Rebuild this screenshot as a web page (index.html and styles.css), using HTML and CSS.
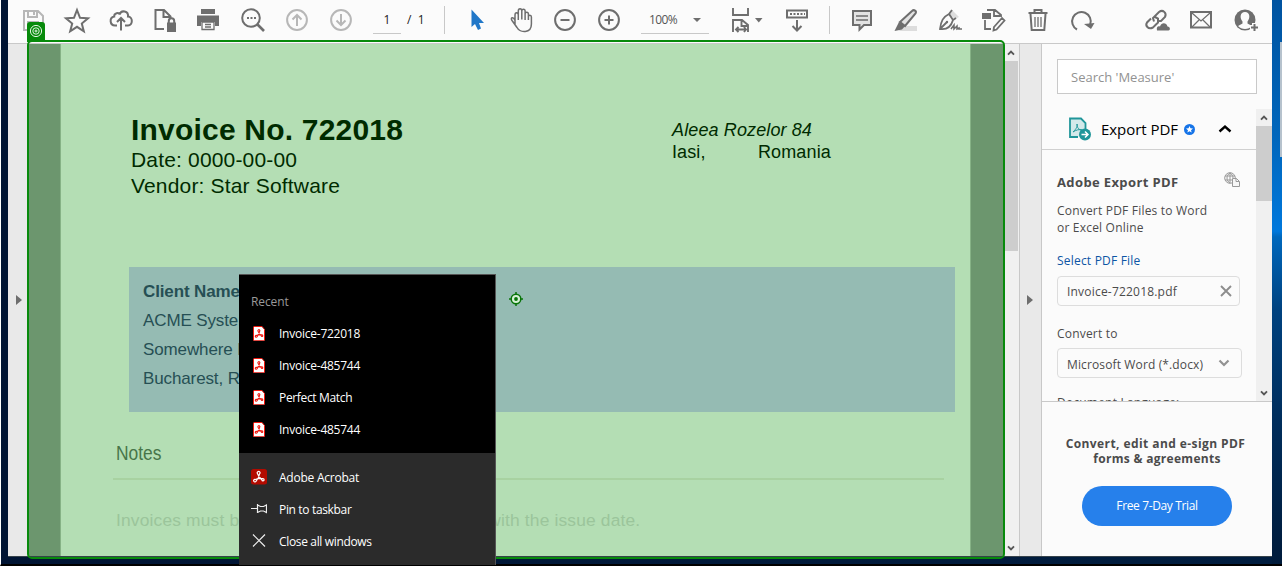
FILE: index.html
```html
<!DOCTYPE html>
<html lang="en">
<head>
<meta charset="utf-8">
<title>Invoice-722018.pdf</title>
<link rel="stylesheet" href="styles.css">
</head>
<body>
<svg class="defs" width="0" height="0">
  <symbol id="pdf" viewBox="0 0 12 15"><path d="M1 .5h8l2.500 3V14a.8.8 0 0 1-.8.8H1.300A.8.8 0 0 1 .5 14V1z" fill="#fff" stroke="#f0180f"/><path d="M5 5.200a1 1 0 1 1 1.600.2C6.300 7 5.300 9.200 4 10.800a.9.9 0 1 1-.5-1.300C5.300 8.700 7.500 8.500 9 8.900a.8.8 0 1 1-.8.9C7 8.500 5.600 7 5 5.200z" fill="none" stroke="#f0180f" stroke-width="1.100"/></symbol>
  <symbol id="up" viewBox="0 0 8 6"><path d="M1 4.700 4 1.700l3 3" fill="none" stroke="#555" stroke-width="1.900"/></symbol>
  <symbol id="down" viewBox="0 0 8 6"><path d="M1 1.300l3 3 3-3" fill="none" stroke="#555" stroke-width="1.900"/></symbol>
</svg>
<div class="desktop">
  <div class="window">
    <header class="toolbar">
      <svg class="tool faint" viewBox="0 0 44 43"><path d="M13 11h14l5 5v14H13zM17 11v6h9v-6M23 12v3M17 30v-8h10v8"/></svg>
      <svg class="tool" viewBox="0 0 44 43"><path d="M22 10l3 7.800 8 .5-6.200 5.200 2 7.800L22 26.800l-6.800 4.500 2-7.800L11 18.300l8-.5z"/></svg>
      <svg class="tool" viewBox="0 0 44 43"><path d="M18 25.500h-2a4.500 4.500 0 0 1-.8-8.900c-.3-3.500 5-4.700 5.500-2 1.500-5.300 9-3.500 8.300 2 5.200 0 5 8.900 0 8.900h-3M22 30.500V18M18 22l4-4 4 4"/></svg>
      <svg class="tool" viewBox="0 0 44 43"><path d="M21 29h-8.500V10H21l6.500 6.500V19M20.500 10v7H27"/><path class="fill" d="M24 22.500h9V32h-9z"/><path d="M25.800 23v-2a2.700 2.700 0 0 1 5.400 0v2"/></svg>
      <svg class="tool" viewBox="0 0 44 43"><path class="fill" d="M14 9h14v5H14zM10 15.500h22V26h-4v-4H14v4h-4z"/><path d="M15 22h12v7.500H15zM18 24.500h6M18 27h6" stroke-width="1.300"/></svg>
      <svg class="tool" viewBox="0 0 44 43"><circle cx="20" cy="18" r="8.800"/><path d="M26 24l7 7" stroke-width="2.600"/><path d="M16 18h2m1.500 0h2m1.500 0h2"/></svg>
      <svg class="tool faint" viewBox="0 0 44 43"><circle cx="22" cy="20" r="9.900"/><path d="M22 26V15M17.500 19.500 22 15l4.500 4.500"/></svg>
      <svg class="tool faint" viewBox="0 0 44 43"><circle cx="22" cy="20" r="9.900"/><path d="M22 14v11M17.500 20.500 22 25l4.500-4.500"/></svg>
      <div class="pages"><span class="page-field">1</span><span class="page-total">/&nbsp; 1</span></div>
      <i class="divider"></i>
      <div class="group view">
        <svg class="tool" viewBox="0 0 44 43"><path d="M16.500 9.500V27l3.500-3 3 6 3-1.500-2-5.500h5z" fill="#2077c8" stroke="none"/></svg>
        <svg class="tool" viewBox="0 0 44 43"><path d="M16 24v-9c0-3 3.300-3 3.300 0v5-9c0-3 3.500-3 3.500 0v8.500V11c0-2.500 3.300-2.500 3.300 0v9-6c0-2.500 3.300-2.500 3.300 0v6-3c0-2.500 3-2.200 3 0v7c0 10-11.500 8.700-14.400 3.500l-5-7c-2-3 1.300-4.200 3 0z" stroke-width="1.500"/></svg>
        <svg class="tool" viewBox="0 0 44 43"><circle cx="22" cy="20" r="9.900"/><path d="M17.500 20h9"/></svg>
        <svg class="tool" viewBox="0 0 44 43"><circle cx="22" cy="20" r="9.900"/><path d="M17.500 20h9M22 15.500v9"/></svg>
      </div>
      <div class="zoom"><span>100%</span><i class="caret"></i></div>
      <svg class="tool fit" viewBox="0 0 50 43"><path d="M9 8v7h15V8M9 32V20h9l6 5v7M17.500 20v6H24M12 29.500h10M14.500 27 12 29.500l2.500 2.500M20 27l2 2.500-2 2.500" stroke-width="1.900"/><path class="fill" d="M31 18h7.500l-3.700 4.400z"/></svg>
      <svg class="tool" viewBox="0 0 44 43"><path d="M12 10.500h20v7H12zM22 20v10M17.500 26l4.500 4.500 4.500-4.500"/><path d="M15 14h15" stroke-dasharray="2 1.500"/></svg>
      <i class="divider second"></i>
      <div class="group edit">
        <svg class="tool" viewBox="0 0 44 43"><path class="tint" d="M13 11h18v14h-7l-4.500 4.500V25H13z"/><path d="M16 16h12M16 20h12" stroke-width="1.300"/></svg>
        <svg class="tool" viewBox="0 0 44 43"><path fill="#ddd" stroke="none" d="M18 26h15v5H15z"/><path class="tint" d="M16 22 28 11c2-2 5 0 3.500 2.500L21 26z"/><path class="fill" d="m15 22 6 4-3 3.500-7.500 1.500z"/></svg>
        <svg class="tool" viewBox="0 0 44 43"><path fill="#ddd" stroke="none" d="m24 10 7 7-4 2-6-5z"/><path d="M21 14c-6 3-8 7-9 15 7 1 11-2 13-9zM21 14l3-4M25 20l3-2M12 29l7-7" stroke-width="1.800"/><circle class="fill" cx="19" cy="22" r="1.200"/><path d="m23 29 3-4 0 4 3-3v3l2-1 0 1h3" stroke-width="1.500"/></svg>
        <svg class="tool" viewBox="0 0 44 43"><path class="fill" d="M10 13h9v6h-9z"/><path d="M15 10h8l6 5v2M22 10v6h6M13 20v9h6M22 27l8-9 2.500 2.500-8 9-3 1z" stroke-width="1.800"/></svg>
        <svg class="tool" viewBox="0 0 44 43"><path d="M12.500 13h19M18.500 12v-2h7v2M14.500 14l1.200 16h12.600l1.200-16"/><path d="M19 17v10M22 17v10M25 17v10" stroke-width="1.300"/></svg>
        <svg class="tool" viewBox="0 0 44 43"><path d="M17 29.500a9.300 9.300 0 1 1 13.200-5"/><path class="fill" d="m24 24 10.500-1-3.500 6z"/></svg>
      </div>
      <div class="group share">
        <svg class="tool" viewBox="0 0 44 43"><path d="m19 21.500-1-3.500 6-6c4-3 8 1 6 5l-4 4h-4M20 17l3 1.500 0 4-5 5c-5 2.500-8-2-6-5l4-4"/><path class="fill" d="M22 30.500c-1-4 1.500-5 3-4 1.500-4.500 6.500-4 7.500 0 3 0 3 4 1 4z"/></svg>
        <svg class="tool" viewBox="0 0 44 43"><path d="M12 12h20v15.500H12z"/><path d="m13 13 9 8 9-8M13 27l7-7m11 7-7-7" stroke-width="1.200"/></svg>
        <svg class="tool" viewBox="0 0 44 43"><circle class="fill" cx="22" cy="20" r="10.500"/><path d="M22 12c-5 0-5.500 6-2.500 9.500v2L15 26c3.500 4 10.500 4 14 0l-4.500-2.500v-2C27.500 18 27 12 22 12z" fill="#fbfbfb" stroke="none"/><path d="M27 27.500h9M31.500 23v9" stroke="#fbfbfb" stroke-width="5"/><path d="M28 27.500h7M31.500 24v7"/></svg>
      </div>
    </header>
    <main class="body">
      <div class="gutter left"><i class="tri"></i></div>
      <section class="viewer">
        <article class="page">
          <div class="heading">
            <div class="issuer"><h1>Invoice No. 722018</h1><p>Date: 0000-00-00</p><p>Vendor: Star Software</p></div>
            <address><em>Aleea Rozelor 84</em><div class="city"><span>Iasi,</span><span>Romania</span></div></address>
          </div>
          <div class="client"><strong>Client Name</strong><span>ACME Systems</span><span>Somewhere Else</span><span>Bucharest, Romania</span></div>
          <h2><span>Notes</span></h2>
          <p class="note">Invoices must be paid within forty days starting with the issue date.</p>
        </article>
      </section>
      <div class="scroll main-scroll"><svg><use href="#up"/></svg><i></i><svg class="end"><use href="#down"/></svg></div>
      <div class="gutter right"><i class="tri"></i></div>
      <aside class="side">
        <div class="search"><span>Search 'Measure'</span></div>
        <div class="panel">
          <div class="tools">
            <div class="export">
              <svg class="export-icon" viewBox="0 0 24 24"><path d="M10 20H2V1.500h11L17.500 6v7" fill="#d3e9ea" stroke="#20969a" stroke-width="1.800"/><path d="M5 15c2-2 5-5 4-8 0 4 2 6 5 6-3-1-6 0-9 2z" fill="none" stroke="#20969a"/><circle cx="17" cy="17.500" r="6" fill="#20969a"/><path d="M13.500 17.500h6m-2.500-3 3 3-3 3" fill="none" stroke="#fff" stroke-width="1.500"/></svg>
              <span>Export PDF</span>
              <svg class="star" viewBox="0 0 11 11"><circle cx="5.500" cy="5.500" r="5.500" fill="#1674e8"/><path d="m5.500 2 1 2.300 2.500.2-2 1.700.7 2.400-2.200-1.300-2.200 1.300L4 6.200 2 4.500l2.500-.2z" fill="#fff"/></svg>
              <svg class="collapse" viewBox="0 0 14 10"><path d="m1.500 7.500 5.500-5 5.500 5" fill="none" stroke="#000" stroke-width="2.400"/></svg>
            </div>
            <div class="form">
              <div class="form-title"><b>Adobe Export PDF</b><svg viewBox="0 0 17 16" fill="none" stroke="#999"><circle cx="6" cy="6" r="5.300"/><path d="M1 4h10M1 8h9M6 1v10M6 1C2 3 2 9 6 11M6 1c2 1 3 3 3 5"/><path d="M8.500 6.500h4l3 3v5h-7zM12 6.500v3h3" fill="#f7f7f7"/></svg></div>
              <p class="lead">Convert PDF Files to Word<br>or Excel Online</p>
              <p class="link">Select PDF File</p>
              <div class="field file"><span>Invoice-722018.pdf</span><svg viewBox="0 0 12 12"><path d="m1 1 10 10M11 1 1 11" stroke="#8d8d8d" stroke-width="1.900"/></svg></div>
              <p class="label">Convert to</p>
              <div class="field format"><span>Microsoft Word (*.docx)</span><svg viewBox="0 0 12 8"><path d="m1.500 1.500 4.500 4.500 4.500-4.500" fill="none" stroke="#929292" stroke-width="2.200"/></svg></div>
              <p class="label language">Document Language:</p>
            </div>
          </div>
          <div class="scroll side-scroll"><svg><use href="#up"/></svg><i></i><svg class="end"><use href="#down"/></svg></div>
        </div>
        <div class="promo"><b class="p1">Convert, edit and e-sign PDF</b><b class="p2">forms &amp; agreements</b><div class="trial">Free 7-Day Trial</div></div>
      </aside>
    </main>
  </div>
  <div class="other-window"></div>
  <div class="highlight"></div>
  <div class="highlight-tag"><svg viewBox="0 0 14 14" fill="none" stroke="#e4f5e4"><circle cx="7" cy="7" r="5.600"/><circle cx="7" cy="7" r="3.200"/><circle cx="7" cy="7" r="1"/></svg></div>
  <svg class="target" viewBox="0 0 14 14"><circle cx="7" cy="7" r="4.800" fill="#d6f1d6" stroke="#087408" stroke-width="1.500"/><circle cx="7" cy="7" r="1.900" fill="#087408"/><path d="M7 0v3M7 11v3M0 7h3M11 7h3" stroke="#087408" stroke-width="1.500"/></svg>
  <nav class="menu">
    <div class="recent">
      <div class="caption">Recent</div>
      <div class="item"><svg class="doc"><use href="#pdf"/></svg><span>Invoice-722018</span></div>
      <div class="item"><svg class="doc"><use href="#pdf"/></svg><span>Invoice-485744</span></div>
      <div class="item"><svg class="doc"><use href="#pdf"/></svg><span class="match">Perfect Match</span></div>
      <div class="item"><svg class="doc"><use href="#pdf"/></svg><span>Invoice-485744</span></div>
    </div>
    <div class="actions">
      <div class="item"><svg viewBox="0 0 16 16"><rect width="16" height="15.500" rx="2.500" fill="#b30b00"/><path transform="translate(-.6 -2.800) scale(1.400)" d="M5 5.200a1 1 0 1 1 1.600.2C6.300 7 5.300 9.200 4 10.800a.9.9 0 1 1-.5-1.300C5.300 8.700 7.500 8.500 9 8.900a.8.8 0 1 1-.8.9C7 8.500 5.600 7 5 5.200z" fill="none" stroke="#fff" stroke-width=".85"/></svg><span class="acrobat">Adobe Acrobat</span></div>
      <div class="item"><svg viewBox="0 0 16 16" fill="none" stroke="#eee" stroke-width="1.200"><path d="M0 7.500h6M6.500 3v9M6.500 4l3 1.500h3L15.500 4v7.500l-3-1.500h-3l-3 1.500"/></svg><span class="pin">Pin to taskbar</span></div>
      <div class="item"><svg viewBox="0 0 16 16"><path d="m2 1.500 12 12M14 1.500 2 13.500" stroke="#eee" stroke-width="1.200"/></svg><span class="close">Close all windows</span></div>
    </div>
  </nav>
</div>
</body>
</html>
```
FILE: styles.css
```css
* { box-sizing: border-box; }
body { margin: 0; overflow: hidden; font-family: "Open Sans", "Noto Sans", sans-serif; }
p, h1, h2 { margin: 0; }
span, b, strong, em { white-space: nowrap; }
.defs { position: absolute; }
.desktop { position: relative; width: 1282px; height: 566px; padding-left: 7px; border-left: 1px solid #fff; border-bottom: 2px solid #000; background: linear-gradient(90deg, #001433, #001d3f 98%); }
.desktop::after { content: ""; position: absolute; left: 1271px; top: 0; width: 10px; height: 564px; background: linear-gradient(#0053a0, #0067bd 25%, #0078dc 41%, #0068bd 42%, #00427f 55%, #002d5b 75%, #001b3b); }
.window { width: 1264px; height: 557px; background: #fbfbfb; border-bottom: 1px solid #36424b; display: flex; flex-direction: column; }
.toolbar { height: 44px; flex: none; display: flex; padding-left: 3px; border-bottom: 1px solid #c9c9c9; }
.tool { width: 44px; height: 43px; flex: none; fill: none; stroke: #6e6e6e; stroke-width: 2; }
.tool .fill { fill: #6e6e6e; stroke: none; }
.tool .tint { fill: #e3e3e3; }
.faint { stroke: #b7b7b7; }
.pages { width: 81px; padding: 6px 0 0 10px; display: flex; font-size: 12px; line-height: 27px; color: #222; }
.page-field { width: 28px; height: 28px; text-align: center; border-bottom: 1px solid #c8c8c8; }
.page-total { padding-left: 6px; white-space: nowrap; }
.divider { width: 1px; height: 28px; margin-top: 6px; background: #c8c8c8; }
.group { display: flex; }
.view { margin-left: 10px; }
.zoom { width: 68px; height: 28px; margin: 6px 0 0 10px; padding: 0 8px; display: flex; justify-content: space-between; align-items: center; font-size: 12px; letter-spacing: -.6px; color: #555; border-bottom: 1px solid #c8c8c8; }
.caret { border: 4px solid transparent; border-top: 4px solid #6e6e6e; border-bottom: 0; }
.tool.fit { width: 50px; margin: 0 1px 0 15px; }
.divider.second { margin-left: 10px; }
.edit { margin-left: 10px; }
.share { margin-left: 31px; }
.body { flex: 1; min-height: 0; display: flex; }
.gutter { width: 20px; flex: none; background: #e9e9e9; display: flex; align-items: center; justify-content: center; }
.gutter.right { width: 23px; padding-right: 3px; border-left: 1px solid #c8c8c8; border-right: 1px solid #c8c8c8; }
.tri { border: 5.500px solid transparent; border-left: 6px solid #6e6e6e; border-right: 0; margin-left: 2px; }
.viewer { width: 976px; flex: none; padding: 0 33px 0 32px; background: #6c966e; font-family: "Liberation Sans", sans-serif; color: #002b00; }
.page { height: 100%; overflow: hidden; background: #b4deb4; border-left: 1px solid #86b286; border-right: 1px solid #86b286; }
.heading { display: flex; padding: 68px 0 0 70px; height: 223px; }
.issuer { width: 541px; flex: none; }
h1 { font-size: 30px; line-height: 35px; letter-spacing: .2px; white-space: nowrap; }
.issuer p { font-size: 21px; line-height: 26px; letter-spacing: .17px; }
address { font-size: 18px; font-style: normal; line-height: 22px; padding-top: 7px; letter-spacing: .12px; }
em { font-style: italic; }
.city { display: flex; }
.city span:first-child { width: 86px; }
.client { margin-left: 68px; width: 826px; height: 145px; padding: 10px 14px; display: flex; flex-direction: column; background: #95bbb3; color: #264f54; font-size: 17px; letter-spacing: -.12px; line-height: 29px; }
h2 { margin: 28px 0 0 52px; width: 831px; height: 40px; padding-left: 3px; border-bottom: 2px solid #a8d2a1; font-size: 20px; font-weight: normal; line-height: 26px; color: #477549; }
h2 span { display: inline-block; transform: scaleX(.87); transform-origin: 0 0; }
.note { padding: 26px 0 0 55px; font-size: 17.400px; letter-spacing: .16px; line-height: 28px; color: #9bc59b; white-space: nowrap; }
.scroll { background: #f0f0f0; display: flex; flex-direction: column; align-items: center; }
.scroll svg { width: 8px; height: 6px; flex: none; margin: 6px 0 5px; }
.scroll i { width: 100%; background: #cdcdcd; }
.scroll .end { margin-top: auto; }
.main-scroll { width: 15px; flex: none; padding-right: 1px; }
.main-scroll i { height: 190px; }
.side { flex: 1; min-width: 0; color: #4b4b4b; display: flex; flex-direction: column; }
.search { width: 200px; height: 35px; margin: 15px 0 15px 15px; padding-left: 13px; border: 1px solid #c9c9c9; background: #fff; font-size: 13px; line-height: 34px; color: #929292; }
.panel { height: 293px; flex: none; display: flex; border-bottom: 1px solid #c9c9c9; }
.tools { width: 214px; overflow: hidden; }
.side-scroll { width: 16px; }
.side-scroll i { height: 75px; }
.export { height: 41px; display: flex; align-items: center; border-bottom: 1px solid #d0d0d0; padding-left: 26px; color: #000; font-size: 15px; }
.export-icon { width: 24px; height: 24px; margin-right: 9px; }
.export span { width: 83px; letter-spacing: -.05px; }
.star { width: 11px; height: 11px; }
.collapse { width: 14px; height: 10px; margin-left: 23px; }
.form { padding-left: 15px; font-size: 12px; line-height: 17px; letter-spacing: .2px; }
.form-title { display: flex; justify-content: space-between; height: 52px; padding: 22px 15px 0 0; font-size: 13px; line-height: 20px; letter-spacing: .38px; }
.form-title svg { width: 17px; height: 16px; }
.link { margin-top: 16px; color: #0d55a5; }
.field { width: 183px; height: 30px; margin-top: 7px; padding: 0 7px 0 9px; border: 1px solid #ddd; border-radius: 4px; display: flex; align-items: center; justify-content: space-between; }
.field svg { width: 12px; height: 12px; }
.format { width: 185px; margin-top: 6px; padding-right: 11px; padding-top: 2px; letter-spacing: .13px; }
.format svg { height: 8px; margin-top: -2px; }
.label { margin-top: 19px; }
.language { margin-top: 16px; }
.promo { flex: 1; padding-top: 34px; display: flex; flex-direction: column; align-items: center; font-size: 12px; line-height: 15px; }
.p1 { letter-spacing: .42px; margin-right: 3px; }
.p2 { letter-spacing: .3px; }
.trial { width: 150px; height: 40px; margin-top: 20px; border-radius: 20px; background: #2680eb; color: #fff; text-align: center; line-height: 40px; letter-spacing: -.36px; }
.other-window { position: absolute; z-index: 2; left: 1279px; top: 42px; width: 2px; height: 115px; background: #b6c2cd; }
.highlight { position: absolute; left: 26px; top: 40px; width: 978px; height: 519px; border: 2px solid #078a0b; border-radius: 5px; }
.highlight-tag { position: absolute; left: 26px; top: 22px; width: 18px; height: 20px; padding: 2px; background: #078a0b; border-radius: 3px 3px 0 0; }
.highlight-tag svg { display: block; width: 14px; height: 14px; }
.target { position: absolute; left: 508px; top: 292px; width: 14px; height: 14px; }
.menu { position: absolute; left: 238px; top: 274px; width: 257px; height: 291px; border: 1px solid #555; border-width: 1px 1px 0 0; color: #fff; font-size: 12px; letter-spacing: -.24px; }
.recent { height: 178px; padding: 10px 0 0 12px; background: #000; }
.caption { height: 32px; line-height: 34px; letter-spacing: -.1px; color: #999; }
.item { height: 32px; display: flex; align-items: center; gap: 12px; }
.item svg { width: 16px; height: 16px; flex: none; }
.item .doc { width: 12px; height: 15px; margin: 0 2px; }
.match, .pin, .close { letter-spacing: -.34px; }
.actions { height: 112px; padding: 8px 0 0 12px; background: #2b2b2b; }
```
